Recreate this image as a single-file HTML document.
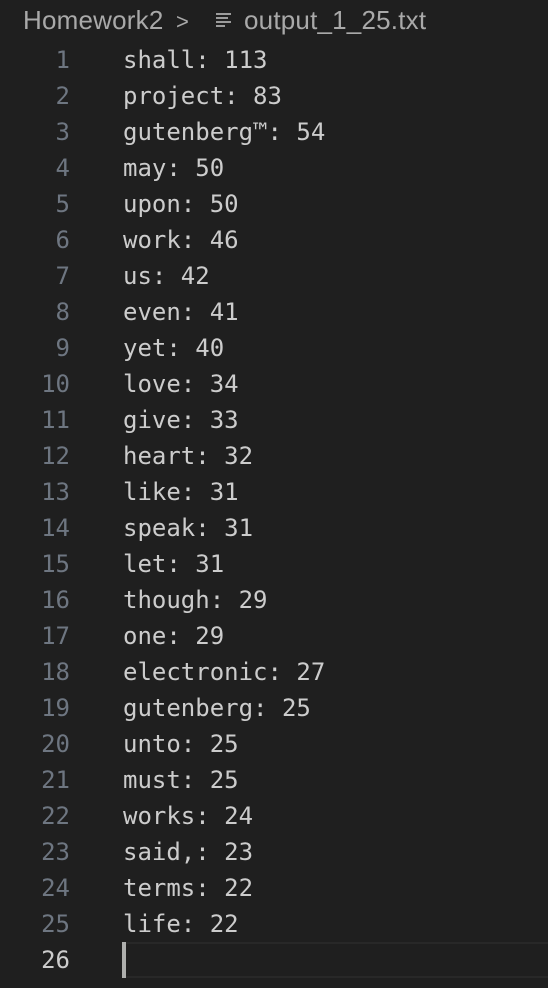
<!DOCTYPE html>
<html><head><style>
html,body{margin:0;padding:0;background:#1f1f1f;width:548px;height:988px;overflow:hidden}
.bc{position:absolute;top:3px;font:26px "Liberation Sans",sans-serif;color:#a9a9a9;white-space:pre;line-height:34px}
.row{position:absolute;left:0;width:548px;height:36px;line-height:36px;font:24px "DejaVu Sans Mono","Liberation Mono",monospace}
.n{position:absolute;right:478px;color:#6e7681;text-align:right}
.t{position:absolute;left:123px;color:#cccccc;white-space:pre}
.cur{position:absolute;left:122px;top:942px;width:426px;height:36px;border-top:2px solid #282828;border-bottom:2px solid #282828;box-sizing:border-box}
.caret{position:absolute;left:122px;top:942px;width:4px;height:36px;background:#aeafad}
</style></head><body>
<div class="bc" style="left:23px;letter-spacing:0.2px">Homework2</div>
<div class="bc" style="left:176px;font-size:22px;top:5px">&gt;</div>
<svg style="position:absolute;left:215px;top:12px" width="18" height="16"><g stroke="#bbb" stroke-width="1.6"><line x1="1" y1="2" x2="16" y2="2"/><line x1="1" y1="6" x2="13" y2="6"/><line x1="1" y1="10" x2="16" y2="10"/><line x1="1" y1="14" x2="10" y2="14"/></g></svg>
<div class="bc" style="left:244px;letter-spacing:0.2px">output_1_25.txt</div>
<div class="cur"></div><div class="caret"></div>
<div id="c"></div>
<script>
var L=["shall: 113","project: 83","gutenberg™: 54","may: 50","upon: 50","work: 46","us: 42","even: 41","yet: 40","love: 34","give: 33","heart: 32","like: 31","speak: 31","let: 31","though: 29","one: 29","electronic: 27","gutenberg: 25","unto: 25","must: 25","works: 24","said,: 23","terms: 22","life: 22",""];
var h="";for(var i=0;i<26;i++){h+='<div class="row" style="top:'+(46+i*36)+'px"><span class="n"'+(i==25?' style="color:#cccccc"':'')+'>'+(i+1)+'</span><span class="t">'+L[i]+'</span></div>';}
document.getElementById("c").innerHTML=h;
</script>
</body></html>
